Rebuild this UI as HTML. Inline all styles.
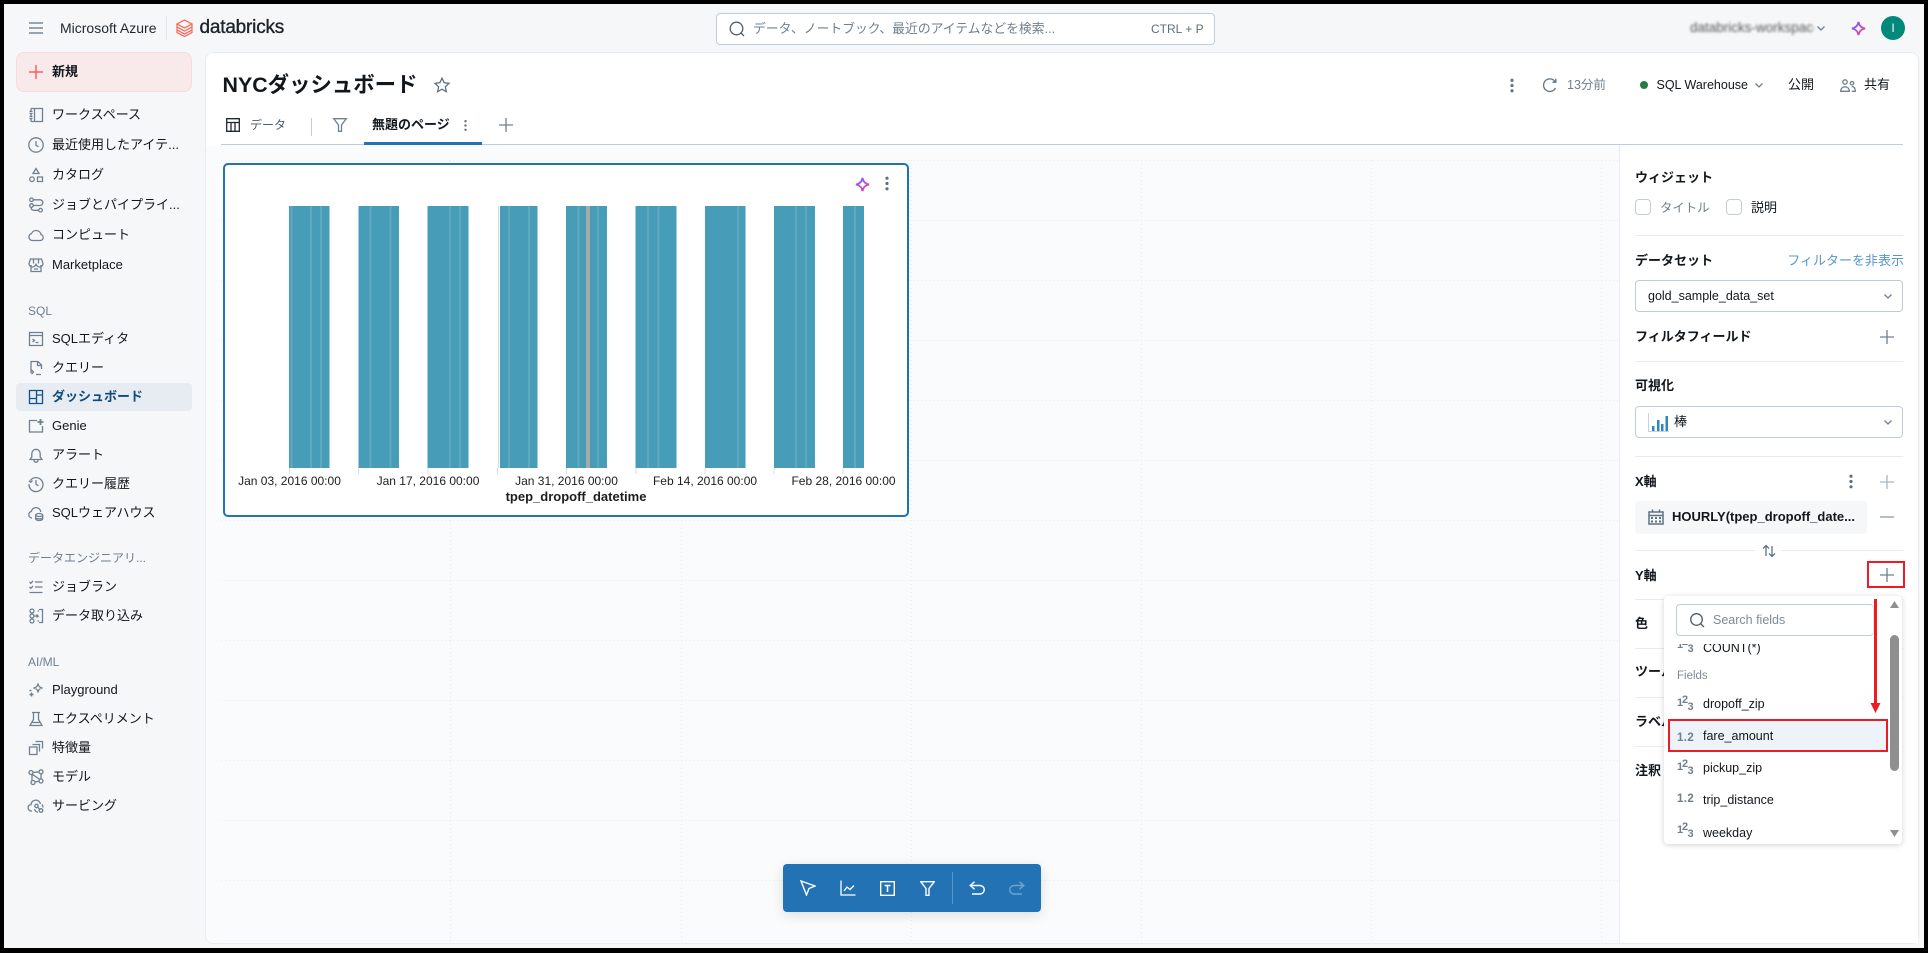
<!DOCTYPE html>
<html lang="ja"><head><meta charset="utf-8"><title>NYCダッシュボード</title>
<style>
*{box-sizing:border-box}
html,body{margin:0;padding:0;width:1928px;height:953px;overflow:hidden;background:#000}
body{position:relative;font-family:"Liberation Sans","Noto Sans CJK JP",sans-serif;font-size:13px;color:#11171c}
.a,.t,svg.i{position:absolute}
.t{white-space:nowrap;line-height:20px;height:20px}
.b{font-weight:700}
.g{color:#6f7f8e}
.i{fill:none;stroke:#6f8090;stroke-width:1.3;overflow:visible}
.hr{position:absolute;height:1px;left:1635px;width:268px;background:#e8ecf0}
.sel{position:absolute;left:1635px;width:268px;height:32px;border:1px solid #c0cdd8;border-radius:4px;background:#fff}
.cb{position:absolute;width:16px;height:16px;border:1px solid #c0cdd8;border-radius:4px;background:#fff}
</style></head><body>
<svg width="0" height="0" style="position:absolute"><defs><linearGradient id="sp" x1="0" y1="0" x2="1" y2="1"><stop offset="0" stop-color="#4b6bf5"/><stop offset=".5" stop-color="#c04fe0"/><stop offset="1" stop-color="#ff3a5e"/></linearGradient></defs></svg>

<!-- shell -->
<div class="a" style="left:4px;top:4px;width:1920px;height:944px;background:#f6f7f9"></div>

<!-- top bar -->
<svg class="i" style="left:29px;top:22px" width="14" height="12" viewBox="0 0 14 12" stroke-width="1.4"><path d="M0 1h14M0 6h14M0 11h14" stroke="#5f7281"/></svg>
<div class="t" style="left:60px;top:18px;font-size:14px;color:#1f272d">Microsoft Azure</div>
<div class="a" style="left:166px;top:16px;width:1px;height:24px;background:#e4e8ec"></div>
<svg class="a" style="left:176px;top:19px" width="17" height="18" viewBox="0 0 17 18" fill="none" stroke="#ff5a45" stroke-width="1.1"><path d="M8.5 1L16 5 8.5 9 1 5zM1 8l7.500 4L16 8M1 11l7.500 4 7.500-4M1 5v8.500l7.500 4 7.500-4V5"/></svg>
<div class="t" style="left:199.500px;top:18px;font-size:19px;letter-spacing:-.2px;color:#1b2228;-webkit-text-stroke:.35px #1b2228">databricks</div>

<div class="a" style="left:716px;top:13px;width:499px;height:32px;background:#fff;border:1px solid #c0cdd8;border-radius:4px"></div>
<svg class="i" style="left:729px;top:21px" width="16" height="16" viewBox="0 0 16 16" stroke-width="1.500"><circle cx="7.500" cy="7.500" r="6.300" stroke="#4d5c68"/><path d="M12 12l3 3" stroke="#4d5c68"/></svg>
<div class="t g" style="left:753px;top:19px;width:300px;font-size:12.800px">データ、ノートブック、最近のアイテムなどを検索...</div>
<div class="t g" style="left:1151px;top:19px;font-size:12px;color:#5f6f7c">CTRL + P</div>

<div class="t" style="left:1690px;top:18px;width:124px;font-size:13.500px;filter:blur(1.200px);color:#55585a;overflow:hidden">databricks-workspace</div>
<svg class="i" style="left:1817px;top:26px" width="8" height="5" viewBox="0 0 8 5"><path d="M.5.500L4 4 7.500.500"/></svg>
<svg class="a" style="left:1851px;top:21px" width="15" height="15" viewBox="0 0 16 16" fill="none" stroke="url(#sp)" stroke-width="2"><path d="M8 1C8.700 5 11 7.300 15 8 11 8.700 8.700 11 8 15 7.300 11 5 8.700 1 8 5 7.300 7.300 5 8 1Z"/></svg>
<div class="a" style="left:1881px;top:16px;width:24px;height:24px;border-radius:50%;background:#00897b;color:#fff;text-align:center;line-height:24px;font-size:12px">I</div>

<!-- sidebar -->
<div class="a" style="left:16px;top:52px;width:176px;height:40px;background:#f8e9ea;border:1px solid #f5dcdd;border-radius:8px"></div>
<svg class="a" style="left:29px;top:65px" width="14" height="14" viewBox="0 0 14 14"><path d="M7 0v14M0 7h14" stroke="#ff5f5f" stroke-width="1.500"/></svg>
<div class="t b" style="left:52px;top:62px">新規</div>

<div class="a" style="left:16px;top:383px;width:176px;height:28px;background:#e6ecf2;border-radius:4px"></div>

<div class="t" style="left:52px;top:105px">ワークスペース</div>
<div class="t" style="left:52px;top:135px">最近使用したアイテ...</div>
<div class="t" style="left:52px;top:165px">カタログ</div>
<div class="t" style="left:52px;top:195px">ジョブとパイプライ...</div>
<div class="t" style="left:52px;top:225px">コンピュート</div>
<div class="t" style="left:52px;top:255px">Marketplace</div>
<div class="t g" style="left:28px;top:301px;font-size:12px">SQL</div>
<div class="t" style="left:52px;top:329px">SQLエディタ</div>
<div class="t" style="left:52px;top:358px">クエリー</div>
<div class="t b" style="left:52px;top:387px;color:#0e4a7c">ダッシュボード</div>
<div class="t" style="left:52px;top:416px">Genie</div>
<div class="t" style="left:52px;top:445px">アラート</div>
<div class="t" style="left:52px;top:474px">クエリー履歴</div>
<div class="t" style="left:52px;top:503px">SQLウェアハウス</div>
<div class="t g" style="left:28px;top:548px;font-size:12px">データエンジニアリ...</div>
<div class="t" style="left:52px;top:577px">ジョブラン</div>
<div class="t" style="left:52px;top:606px">データ取り込み</div>
<div class="t g" style="left:28px;top:652px;font-size:12px">AI/ML</div>
<div class="t" style="left:52px;top:680px">Playground</div>
<div class="t" style="left:52px;top:709px">エクスペリメント</div>
<div class="t" style="left:52px;top:738px">特徴量</div>
<div class="t" style="left:52px;top:767px">モデル</div>
<div class="t" style="left:52px;top:796px">サービング</div>

<!-- sidebar icons -->
<svg class="i" style="left:28px;top:107px" width="16" height="16" viewBox="0 0 16 16"><path d="M3 1.500h11.500v13H3M6.500 1.500v13M3 1.500v3M3 6.500v3M3 11.500v3M1.500 4.500h3M1.500 6.500h3M1.500 9.500h3M1.500 11.500h3"/></svg>
<svg class="i" style="left:28px;top:137px" width="16" height="16" viewBox="0 0 16 16" stroke-width="1.400"><circle cx="8" cy="8" r="7.200"/><path d="M8 4v4.300l2.500 1.500"/></svg>
<svg class="i" style="left:28px;top:167px" width="16" height="16" viewBox="0 0 16 16"><path d="M8 1.500l3 5H5zM9.500 10h5v4.500h-5z"/><circle cx="4" cy="12.200" r="2.300"/></svg>
<svg class="i" style="left:28px;top:197px" width="16" height="16" viewBox="0 0 16 16"><circle cx="3.500" cy="2.800" r="1.800"/><circle cx="12.500" cy="13.200" r="1.800"/><circle cx="3.500" cy="8.500" r="1.800"/><path d="M5.500 2.800h6.500a2.800 2.800 0 010 5.700H5.500M3 10.300c0 2 1 3 3 3h4.500"/></svg>
<svg class="i" style="left:28px;top:227px" width="16" height="16" viewBox="0 0 16 16" stroke-width="1.400"><path d="M4 13.500h8.300a3 3 0 00.700-5.900A5 5 0 003.500 6.500 3.600 3.600 0 004 13.500z"/></svg>
<svg class="i" style="left:28px;top:257px" width="16" height="16" viewBox="0 0 16 16"><path d="M3 8v6.500h10V8M2.500 2h11l1.500 4.500a2.300 2.300 0 01-7 0 2.300 2.300 0 01-7 0zM5.500 2v4.500M10.500 2v4.500M6 12h4"/></svg>
<svg class="i" style="left:28px;top:331px" width="16" height="16" viewBox="0 0 16 16"><path d="M1.500 1.500h13v13h-13zM1.500 4.500h13M4.500 8l2 1.500-2 1.500M7.500 11.500h3"/></svg>
<svg class="i" style="left:28px;top:360px" width="16" height="16" viewBox="0 0 16 16"><path d="M3 13V1.500h7l3.500 3.500v4M9.500 1.500V5.500h4M3.500 10l2 2-2 2M8 14.500h5"/></svg>
<svg class="i" style="left:28px;top:389px" width="16" height="16" viewBox="0 0 16 16" stroke-width="1.500"><path stroke="#0e538b" d="M1.500 1.500h13v13h-13zM8.500 1.500v13M1.500 9.500h7M8.500 6h6"/></svg>
<svg class="i" style="left:28px;top:418px" width="16" height="16" viewBox="0 0 16 16"><path d="M9 2.500H1.500v11.500h13V8"/><path d="M12.500 1v6M9.500 4h6" stroke-width="1.800"/></svg>
<svg class="i" style="left:28px;top:447px" width="16" height="16" viewBox="0 0 16 16"><path d="M2 12.500h12l-1.800-2.500V6.500a4.200 4.200 0 00-8.400 0V10zM6 12.500v.7a2 2 0 004 0v-.7"/></svg>
<svg class="i" style="left:28px;top:476px" width="16" height="16" viewBox="0 0 16 16" stroke-width="1.400"><path d="M2.300 4.500A7 7 0 111 8M.8 4.800l2 1.500L4.500 4.500M8 4v4.300l2.500 1.500"/></svg>
<svg class="i" style="left:28px;top:505px" width="16" height="16" viewBox="0 0 16 16"><path d="M4 13H3.800A3.300 3.300 0 013.300 6.500 4.800 4.800 0 0112.800 7"/><ellipse cx="11.200" cy="10" rx="3.500" ry="1.500"/><path d="M7.700 10v4c0 .8 1.600 1.500 3.500 1.500s3.500-.7 3.500-1.500v-4M7.700 12.500c0 .8 1.600 1.400 3.500 1.400s3.500-.6 3.500-1.400"/></svg>
<svg class="i" style="left:28px;top:579px" width="16" height="16" viewBox="0 0 16 16"><path d="M1.500 3l1.300 1.300L5 2M1.500 8l1.300 1.300L5 7M7 3h7.500M7 8h7.500M1.500 13.500h13"/></svg>
<svg class="i" style="left:28px;top:608px" width="16" height="16" viewBox="0 0 16 16"><circle cx="4" cy="3" r="2"/><circle cx="4" cy="8" r="2"/><circle cx="4" cy="13" r="2"/><path d="M6 8h4l-1.500-1.500M10 8L8.500 9.500M11 1.500h3.500v13H11M9.500 3h1.500M9.500 13h1.500"/></svg>
<svg class="i" style="left:28px;top:682px" width="16" height="16" viewBox="0 0 16 16"><path d="M10 1.500c.5 3 1.500 4 4.500 4.500-3 .5-4 1.500-4.500 4.500C9.500 7.500 8.500 6.500 5.500 6 8.500 5.500 9.500 4.500 10 1.500z"/><path d="M3.500 10.500v4M1.500 12.500h4M1.500 8.500h2" stroke-width="1.500"/></svg>
<svg class="i" style="left:28px;top:711px" width="16" height="16" viewBox="0 0 16 16"><path d="M4 1.500h8M5.500 1.500v7L2 14.500h12l-3.500-6v-7M3.500 11.500h9"/></svg>
<svg class="i" style="left:28px;top:740px" width="16" height="16" viewBox="0 0 16 16"><path d="M1.500 7h7.500v7.500H1.500zM4.500 4.500h7v7M7.500 1.500h7v7"/></svg>
<svg class="i" style="left:28px;top:769px" width="16" height="16" viewBox="0 0 16 16"><circle cx="3" cy="3.500" r="2"/><circle cx="13" cy="2.800" r="2"/><circle cx="13" cy="12" r="2"/><circle cx="5" cy="13.500" r="2"/><path d="M5 3.500l6-.7M4 5.200l8 5.300M13 4.800v5.200M4 6v5.500M7 13l4-.8"/></svg>
<svg class="i" style="left:28px;top:798px" width="16" height="16" viewBox="0 0 16 16"><path d="M4 13H3.500A3.200 3.200 0 013 6.600 4.800 4.800 0 0112.500 6"/><circle cx="8.500" cy="8" r="1.700"/><circle cx="13" cy="12.500" r="1.800"/><path d="M10 9.500l1.800 1.800M14 6.500c.8 1 1 2 .8 3M6.500 11c.5 2 2 3 3.500 3.300"/></svg>

<!-- main panel -->
<div class="a" style="left:205px;top:52px;width:1714px;height:892px;background:#fff;border:1px solid #e8ecf0;border-radius:8px;overflow:hidden">
  <div class="a" style="left:0;top:93px;width:1414px;height:800px;background:#fafbfc"></div>
</div>
<!-- grid -->
<svg class="a" style="left:206px;top:146px" width="1413" height="797" fill="none" stroke="#e9ecef" stroke-width="1" stroke-dasharray="1 3">
<path d="M15 14.500H1413M15 74.500H1413M15 134.500H1413M15 194.500H1413M15 254.500H1413M15 314.500H1413M15 374.500H1413M15 434.500H1413M15 494.500H1413M15 554.500H1413M15 614.500H1413M15 674.500H1413M15 734.500H1413M15 794.500H1413"/>
<path d="M244.500 14V797M475.500 14V797M705.500 14V797M935.500 14V797M1165.500 14V797M1395.500 14V797"/>
</svg>

<!-- header -->
<div class="t b" style="left:222.500px;top:73px;height:24px;line-height:24px;font-size:21.400px;color:#11171c">NYCダッシュボード</div>
<svg class="i" style="left:434px;top:77px" width="16" height="16" viewBox="0 0 16 16" stroke-width="1.400"><path d="M8 1.200l2.100 4.500 4.900.6-3.600 3.400.9 4.900L8 12.200l-4.300 2.400.9-4.900L1 6.300l4.900-.6z" stroke="#5f7281"/></svg>

<svg class="a" style="left:1510px;top:78px" width="4" height="15" fill="#5f7281"><circle cx="2" cy="2.200" r="1.600"/><circle cx="2" cy="7.500" r="1.600"/><circle cx="2" cy="12.800" r="1.600"/></svg>
<svg class="i" style="left:1542px;top:78px" width="15" height="15" viewBox="0 0 15 15" stroke-width="1.400"><path d="M13 3.500A6.300 6.300 0 1013.500 10" stroke="#5f7281"/><path d="M13.800 .8v3.400h-3.400" stroke="#5f7281"/></svg>
<div class="t g" style="left:1567px;top:75px;font-size:12.500px;color:#6f7f8e">13分前</div>
<div class="a" style="left:1640px;top:81px;width:8px;height:8px;border-radius:50%;background:#277c43"></div>
<div class="t" style="left:1656.500px;top:75px;font-size:12.500px">SQL Warehouse</div>
<svg class="i" style="left:1755px;top:83px" width="8" height="5" viewBox="0 0 8 5"><path d="M.5.500L4 4 7.500.500"/></svg>
<div class="t" style="left:1788px;top:75px">公開</div>
<svg class="i" style="left:1840px;top:79px" width="16" height="13" viewBox="0 0 16 13" stroke-width="1.200"><circle cx="5" cy="3" r="2.200"/><path d="M.7 12.300c0-3 2-4.500 4.300-4.500s4.300 1.500 4.300 4.500zM11.800 7.500c2 .1 3.500 1.500 3.500 4.800h-3.500"/><circle cx="12" cy="4.200" r="1.700"/></svg>
<div class="t" style="left:1864px;top:75px">共有</div>

<!-- tabs -->
<svg class="i" style="left:226px;top:118px" width="14" height="14" viewBox="0 0 14 14" stroke-width="1.400"><path d="M.7.700h12.600v12.600H.7z" stroke="#1f272d"/><path d="M.7 4.500h12.600M5 4.500v8.800M9 4.500v8.800" stroke="#1f272d"/></svg>
<div class="t g" style="left:250px;top:115px;font-size:12px;color:#4d5c68">データ</div>
<div class="a" style="left:311px;top:118px;width:1px;height:18px;background:#c0cdd8"></div>
<svg class="i" style="left:333px;top:118px" width="14" height="14" viewBox="0 0 14 14" stroke-width="1.400"><path d="M.7.700h12.600L8.500 7v6.300h-3V7z"/></svg>
<div class="t b" style="left:372px;top:115px">無題のページ</div>
<svg class="a" style="left:464px;top:120px" width="3" height="11" fill="#5f7281"><circle cx="1.500" cy="1.200" r="1.200"/><circle cx="1.500" cy="5.500" r="1.200"/><circle cx="1.500" cy="9.800" r="1.200"/></svg>
<svg class="a" style="left:499px;top:118px" width="14" height="14" viewBox="0 0 14 14"><path d="M7 0v14M0 7h14" stroke="#6f8090" stroke-width="1.300"/></svg>
<div class="a" style="left:221px;top:144px;width:1682px;height:1px;background:#c0cdd8"></div>
<div class="a" style="left:364px;top:142px;width:118px;height:3px;background:#2272b4"></div>

<!-- widget card -->
<div class="a" style="left:222.500px;top:163px;width:686px;height:354px;background:#fff;border:2px solid #2272b4;border-radius:5px"></div>
<svg class="a" style="left:855px;top:177px" width="15" height="15" viewBox="0 0 16 16" fill="none" stroke="url(#sp)" stroke-width="2"><path d="M8 1C8.700 5 11 7.300 15 8 11 8.700 8.700 11 8 15 7.300 11 5 8.700 1 8 5 7.300 7.300 5 8 1Z"/></svg>
<svg class="a" style="left:885px;top:176px" width="4" height="15" fill="#5f7281"><circle cx="2" cy="2.200" r="1.600"/><circle cx="2" cy="7.500" r="1.600"/><circle cx="2" cy="12.800" r="1.600"/></svg>
<svg class="a" style="left:223px;top:163px" width="686" height="354" viewBox="223 163 686 354">
<g fill="#479db8">
<rect x="289" y="206" width="40.500" height="262"/><rect x="358.500" y="206" width="40.500" height="262"/><rect x="427.500" y="206" width="41" height="262"/><rect x="500" y="206" width="37.500" height="262"/><rect x="566" y="206" width="41" height="262"/><rect x="635.500" y="206" width="41" height="262"/><rect x="705" y="206" width="40.500" height="262"/><rect x="774" y="206" width="41" height="262"/><rect x="843" y="206" width="21" height="262"/>
</g>
<g fill="#60a8c0">
<rect x="290.500" y="206" width="2" height="262"/><rect x="310" y="206" width="2" height="262"/><rect x="320" y="206" width="2" height="262"/><rect x="369.500" y="206" width="2" height="262"/><rect x="389.500" y="206" width="2" height="262"/><rect x="449" y="206" width="2" height="262"/><rect x="459" y="206" width="2" height="262"/><rect x="508" y="206" width="2" height="262"/><rect x="528" y="206" width="2" height="262"/><rect x="577.500" y="206" width="2" height="262"/><rect x="597" y="206" width="2" height="262"/><rect x="647" y="206" width="2" height="262"/><rect x="657.500" y="206" width="2" height="262"/><rect x="737" y="206" width="2" height="262"/><rect x="795" y="206" width="2" height="262"/><rect x="805" y="206" width="2" height="262"/><rect x="854" y="206" width="2" height="262"/>
</g>
<rect x="498" y="206" width="1" height="262" fill="#c9dfe7"/>
<rect x="586" y="206" width="4" height="262" fill="#a9a9a9"/>
<path d="M289.500 468v6M358.500 468v6M428 468v6M497.500 468v6M566.500 468v6M636 468v6M705 468v6M774 468v6M843 468v6" stroke="#ddd" stroke-width="1"/>
<g font-family="Liberation Sans, Arial, sans-serif" font-size="12" fill="#1d1d1d" text-anchor="middle">
<text x="289.500" y="485">Jan 03, 2016 00:00</text><text x="428" y="485">Jan 17, 2016 00:00</text><text x="566.500" y="485">Jan 31, 2016 00:00</text><text x="705" y="485">Feb 14, 2016 00:00</text><text x="843.500" y="485">Feb 28, 2016 00:00</text>
<text x="576" y="501" font-size="13" font-weight="700">tpep_dropoff_datetime</text>
</g>
</svg>

<!-- right panel -->
<div class="a" style="left:1619px;top:145px;width:1px;height:798px;background:#e8ecf0"></div>
<div class="a" style="left:1620px;top:145px;width:298px;height:798px;background:#fff"></div>
<div class="t b" style="left:1635px;top:168px">ウィジェット</div>
<div class="cb" style="left:1635px;top:199px"></div>
<div class="t g" style="left:1660px;top:198px;font-size:12.400px">タイトル</div>
<div class="cb" style="left:1726px;top:199px"></div>
<div class="t" style="left:1751px;top:198px">説明</div>
<div class="hr" style="top:235px"></div>
<div class="t b" style="left:1635px;top:251px">データセット</div>
<div class="t" style="right:24px;top:251px;font-size:13px;color:#5597cc">フィルターを非表示</div>
<div class="sel" style="top:280px"></div>
<div class="t" style="left:1648px;top:286px;font-size:12.500px">gold_sample_data_set</div>
<svg class="i" style="left:1884px;top:294px" width="8" height="5" viewBox="0 0 8 5"><path d="M.5.500L4 4 7.500.500"/></svg>
<div class="t b" style="left:1635px;top:327px">フィルタフィールド</div>
<svg class="a" style="left:1880px;top:330px" width="14" height="14" viewBox="0 0 14 14"><path d="M7 0v14M0 7h14" stroke="#6f8090" stroke-width="1.300"/></svg>
<div class="hr" style="top:361px"></div>
<div class="t b" style="left:1635px;top:376px">可視化</div>
<div class="sel" style="top:406px"></div>
<svg class="a" style="left:1648px;top:413px" width="21" height="19" viewBox="0 0 21 19"><path d="M.5 0v18.500H21" fill="none" stroke="#c6d2dc"/><path d="M4 13h2.500v5H4zM9 7h2.500v11H9zM13 11h2.500v7H13zM17.500 3H20v15h-2.500z" fill="#2f86c4"/></svg>
<div class="t" style="left:1674px;top:412px">棒</div>
<svg class="i" style="left:1884px;top:420px" width="8" height="5" viewBox="0 0 8 5"><path d="M.5.500L4 4 7.500.500"/></svg>
<div class="hr" style="top:456px"></div>
<div class="t b" style="left:1635px;top:472px;font-weight:700">X軸</div>
<svg class="a" style="left:1849px;top:474px" width="4" height="15" fill="#5f7281"><circle cx="2" cy="2.200" r="1.600"/><circle cx="2" cy="7.500" r="1.600"/><circle cx="2" cy="12.800" r="1.600"/></svg>
<svg class="a" style="left:1880px;top:475px" width="14" height="14" viewBox="0 0 14 14"><path d="M7 0v14M0 7h14" stroke="#a9b7c3" stroke-width="1.300"/></svg>
<div class="a" style="left:1635px;top:501px;width:232px;height:33px;background:#f6f7f9;border-radius:4px"></div>
<svg class="a" style="left:1648px;top:509px" width="16" height="16" viewBox="0 0 16 16" fill="none" stroke="#5f7281" stroke-width="1.500"><path d="M1 3h14v12H1zM4.500 .5v3M11.500 .5v3M1 6.500h14"/><path d="M3 8h2v2H3zM7 8h2v2H7zM11 8h2v2h-2zM3 11.500h2v2H3zM7 11.500h2v2H7zM11 11.500h2v2h-2z" fill="#5f7281" stroke="none"/></svg>
<div class="t b" style="left:1672px;top:507px;font-size:13px">HOURLY(tpep_dropoff_date...</div>
<svg class="a" style="left:1880px;top:516px" width="14" height="2"><path d="M0 1h14" stroke="#8c9aa6" stroke-width="1.300"/></svg>
<div class="hr" style="top:550px;width:120px"></div>
<div class="hr" style="top:550px;left:1781px;width:122px"></div>
<svg class="i" style="left:1762px;top:544px" width="14" height="14" viewBox="0 0 14 14" stroke-width="1.400"><path d="M4 12V1.500M1 4.500L4 1.500l3 3M10 2v10.500M7 9.500l3 3 3-3" stroke="#5f7281"/></svg>
<div class="t b" style="left:1635px;top:566px">Y軸</div>
<svg class="a" style="left:1880px;top:568px" width="14" height="14" viewBox="0 0 14 14"><path d="M7 0v14M0 7h14" stroke="#6f8090" stroke-width="1.300"/></svg>
<div class="a" style="left:1866.500px;top:561px;width:38px;height:27px;border:2px solid #ed1c24"></div>
<div class="hr" style="top:599px"></div>
<div class="t b" style="left:1635px;top:614px">色</div>
<div class="hr" style="top:648px"></div>
<div class="t b" style="left:1635px;top:662px">ツール</div>
<div class="hr" style="top:697px"></div>
<div class="t b" style="left:1635px;top:712px">ラベル</div>
<div class="hr" style="top:746px"></div>
<div class="t b" style="left:1635px;top:761px">注釈</div>

<!-- dropdown -->
<div class="a" style="left:1664px;top:596px;width:238px;height:248px;background:#fff;border-radius:4px;box-shadow:0 1px 6px rgba(0,0,0,.18);overflow:hidden">
  <div class="t" style="left:39px;top:42px;font-size:12.500px">COUNT(*)</div>
  <svg class="a" style="left:13px;top:0" width="17" height="60" font-family="Liberation Sans, sans-serif" font-size="11" font-weight="700" fill="#6f7f8e"><text x="0" y="52">1</text><text x="5" y="49">2</text><text x="10.500" y="56">3</text></svg>
  <div class="a" style="left:0;top:0;width:224px;height:48px;background:#fff"></div>
  <div class="a" style="left:12px;top:8px;width:198px;height:32px;border:1px solid #c0cdd8;border-radius:4px;background:#fff;border-right-color:#dfe5ea"></div>
  <svg class="i" style="left:26px;top:17px" width="15" height="15" viewBox="0 0 15 15" stroke-width="1.400"><circle cx="6.500" cy="6.500" r="5.800" stroke="#4d5c68"/><path d="M10.800 10.800L14 14" stroke="#4d5c68"/></svg>
  <div class="t" style="left:49px;top:14px;font-size:12.500px;color:#7d8b97">Search fields</div>
  <div class="t" style="left:13px;top:70px;font-size:11.500px;color:#7d8b97">Fields</div>
  <div class="a" style="left:4px;top:123px;width:220px;height:33px;background:#eef3f9;border:2px solid #ed1c24"></div>
  <div class="t" style="left:39px;top:98px;font-size:12.500px">dropoff_zip</div>
  <div class="t" style="left:39px;top:130px;font-size:12.500px">fare_amount</div>
  <div class="t" style="left:39px;top:162px;font-size:12.500px">pickup_zip</div>
  <div class="t" style="left:39px;top:194px;font-size:12.500px">trip_distance</div>
  <div class="t" style="left:39px;top:227px;font-size:12.500px">weekday</div>
  <svg class="a" style="left:13px;top:0" width="18" height="248" font-family="Liberation Sans, sans-serif" font-size="11" font-weight="700" fill="#6f7f8e">
    <text x="0" y="110">1</text><text x="5" y="107">2</text><text x="10.500" y="114">3</text>
    <text x="0" y="145" font-size="11.500" letter-spacing=".4">1.2</text>
    <text x="0" y="174">1</text><text x="5" y="171">2</text><text x="10.500" y="178">3</text>
    <text x="0" y="206" font-size="11.500" letter-spacing=".4">1.2</text>
    <text x="0" y="237">1</text><text x="5" y="234">2</text><text x="10.500" y="241">3</text>
  </svg>
  <div class="a" style="left:226px;top:39px;width:9px;height:136px;border-radius:5px;background:#8f8f8f"></div>
  <svg class="a" style="left:226px;top:5px" width="9" height="7"><path d="M4.500 0L9 7H0z" fill="#8f8f8f"/></svg>
  <svg class="a" style="left:226px;top:234px" width="9" height="7"><path d="M4.500 7L9 0H0z" fill="#8f8f8f"/></svg>
</div>
<!-- red arrow -->
<svg class="a" style="left:1868px;top:598px" width="15" height="117"><path d="M7.500 1V106" stroke="#ed1c24" stroke-width="3"/><path d="M2.500 105h10l-5 10z" fill="#ed1c24"/></svg>

<!-- toolbar -->
<div class="a" style="left:783px;top:864px;width:258px;height:48px;background:#2272b4;border-radius:4px;box-shadow:0 3px 12px rgba(0,0,0,.12)"></div>
<svg class="a" style="left:800px;top:880px;fill:none;stroke:#fff;stroke-width:1.400" width="16" height="16" viewBox="0 0 16 16"><path d="M1 1l14 5-6 2.500L6.500 15z"/></svg>
<svg class="a" style="left:840px;top:880px;fill:none;stroke:#fff;stroke-width:1.300" width="16" height="16" viewBox="0 0 16 16"><path d="M1 .5V15h14.500M4 11l3-4 3 2.500 4-4"/></svg>
<svg class="a" style="left:880px;top:881px;fill:none;stroke:#fff;stroke-width:1.400" width="15" height="15" viewBox="0 0 15 15"><path d="M.7.700h13.600v13.600H.7z"/><path d="M4.500 4.500h6M7.500 4.500v6.500" stroke-width="1.600"/></svg>
<svg class="a" style="left:920px;top:881px;fill:none;stroke:#fff;stroke-width:1.400" width="15" height="15" viewBox="0 0 15 15"><path d="M.7.700h13.600L9 7.500v6.800H6V7.500z"/></svg>
<div class="a" style="left:951.500px;top:872px;width:1px;height:32px;background:#5a97c9"></div>
<svg class="a" style="left:969px;top:881px;fill:none;stroke:#fff;stroke-width:1.400" width="16" height="14" viewBox="0 0 16 14"><path d="M5.500.8L1.200 4.500l4.300 3.700M1.200 4.500H11a4 4 0 010 8.500H3"/></svg>
<svg class="a" style="left:1009px;top:881px;fill:none;stroke:#6ea3cf;stroke-width:1.400" width="16" height="14" viewBox="0 0 16 14"><path d="M10.500.8l4.300 3.700-4.300 3.700M14.800 4.500H5a4 4 0 000 8.500h8"/></svg>

</body></html>
